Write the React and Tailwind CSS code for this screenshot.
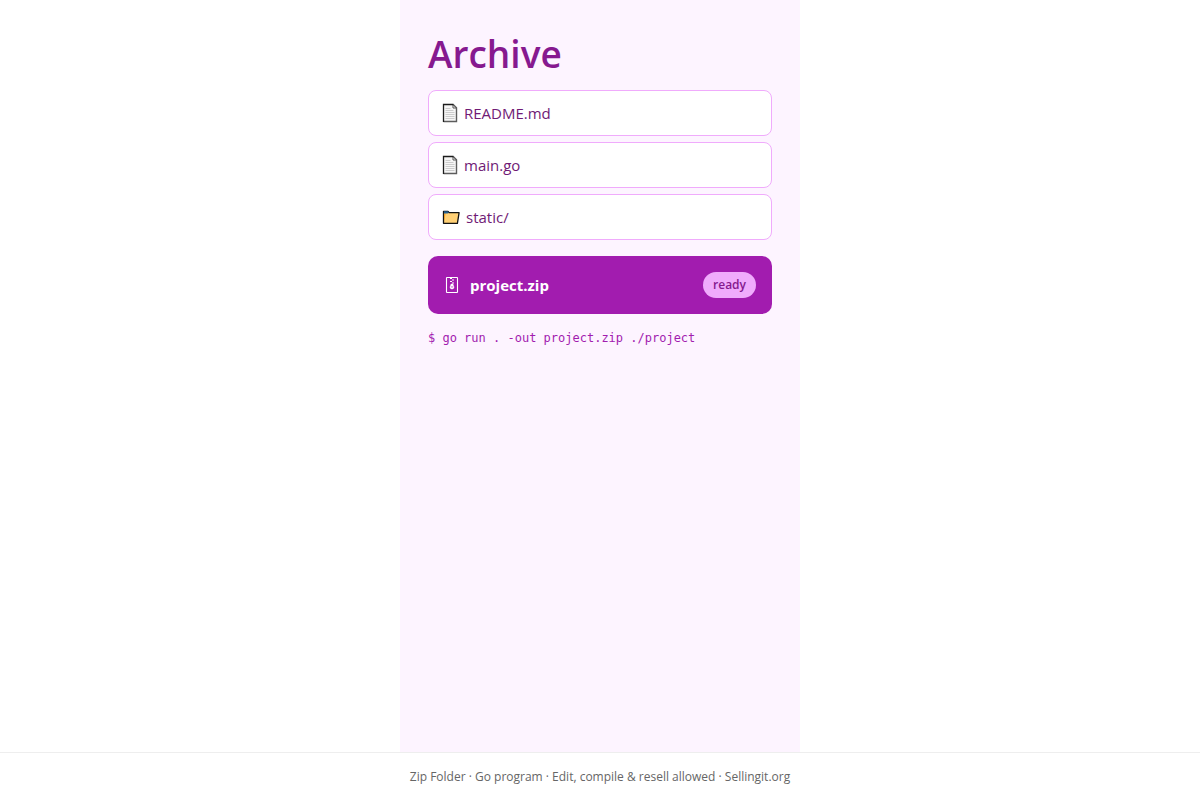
function FileIcon() {
  return (
    <svg aria-hidden="true" width="16" height="20" viewBox="0 0 16 20" className="shrink-0">
      <path d="M1.5 1.5h10l3 3v14h-13z" fill="#f6f6f6" />
      <path d="M11 1.5V5h3.5" fill="#ffffff" stroke="#555555" strokeWidth="1" />
      <path d="M1.5 18.5h13V4.8l-3.3-3.3" fill="none" stroke="#5c5c5c" strokeWidth="1.4" />
      <path d="M1.5 19V1.5h10" fill="none" stroke="#1c1c1c" strokeWidth="1.3" />
      <path d="M3.5 5.5h5M3.5 7.5h8M3.5 9.5h9M3.5 11.5h9M3.5 13.5h9M3.5 15.5h9" stroke="#cccccc" strokeWidth="1" />
    </svg>
  );
}

function FolderIcon() {
  return (
    <svg aria-hidden="true" width="18" height="20" viewBox="0 0 18 20" className="shrink-0">
      <path d="M1.5 4.5h4.5l1.2 1.2h9.9L15.4 16.3H1.5z" fill="#ffd075" stroke="#111111" strokeWidth="1.3" strokeLinejoin="round" />
      <path d="M2.1 6.5h1.5L2.2 14z" fill="#f59e1b" />
      <path d="M2 4.2h3.8l1 1.4L5.6 6.6H2z" fill="#245f8f" />
    </svg>
  );
}

function ZipIcon() {
  return (
    <svg aria-hidden="true" width="16" height="20" viewBox="0 0 16 20" className="shrink-0" fill="none" stroke="#ffffff">
      <rect x="2.5" y="2.5" width="11" height="15" rx="0.5" strokeWidth="1.1" />
      <path d="M6 3.5h2M8 5h2M6 6.5h2M8 8h2" strokeWidth="1.2" />
      <path d="M7 9h2l1 3.2c0 1.2-.8 1.8-2 1.8s-2-.6-2-1.8z" fill="#ffffff" strokeWidth="0.4" />
      <path d="M8 11.2v1.4" stroke="#a21caf" strokeWidth="1" />
    </svg>
  );
}

const entries = [
  { name: "README.md", icon: FileIcon },
  { name: "main.go", icon: FileIcon },
  { name: "static/", icon: FolderIcon },
];

export default function App() {
  return (
    <div className="flex min-h-screen flex-col bg-white font-['Open_Sans',sans-serif]">
      <main className="mx-auto w-full max-w-[400px] grow bg-[#fdf4ff] px-7 pt-7">
        <h1 className="text-[37px] leading-[52px] font-semibold text-[#86198f]">Archive</h1>
        <ul className="mt-2.5 flex flex-col gap-1.5">
          {entries.map(({ name, icon: Icon }) => (
            <li
              key={name}
              className="flex items-center gap-1.5 rounded-lg border border-[#f0abfc] bg-white px-[13px] py-[11px] text-[15px] leading-[22px] text-[#701a75]"
            >
              <Icon />
              <span>{name}</span>
            </li>
          ))}
        </ul>
        <div className="mt-4 flex items-center gap-2.5 rounded-[10px] bg-[#a21caf] p-4 text-white">
          <ZipIcon />
          <strong className="text-[15px] leading-[26px] font-bold">project.zip</strong>
          <span className="ml-auto rounded-full bg-[#f0abfc] px-2.5 text-xs leading-[26px] font-semibold text-[#86198f]">
            ready
          </span>
        </div>
        <p className="mt-4 text-xs leading-4 text-[#a21caf]">
          <code className="font-['DejaVu_Sans_Mono',monospace]">$ go run . -out project.zip ./project</code>
        </p>
      </main>
      <footer className="border-t border-[#eeeeee] px-4 py-4 text-center text-xs leading-[15px] text-[#666666]">
        Zip Folder · Go program · Edit, compile &amp; resell allowed · Sellingit.org
      </footer>
    </div>
  );
}
